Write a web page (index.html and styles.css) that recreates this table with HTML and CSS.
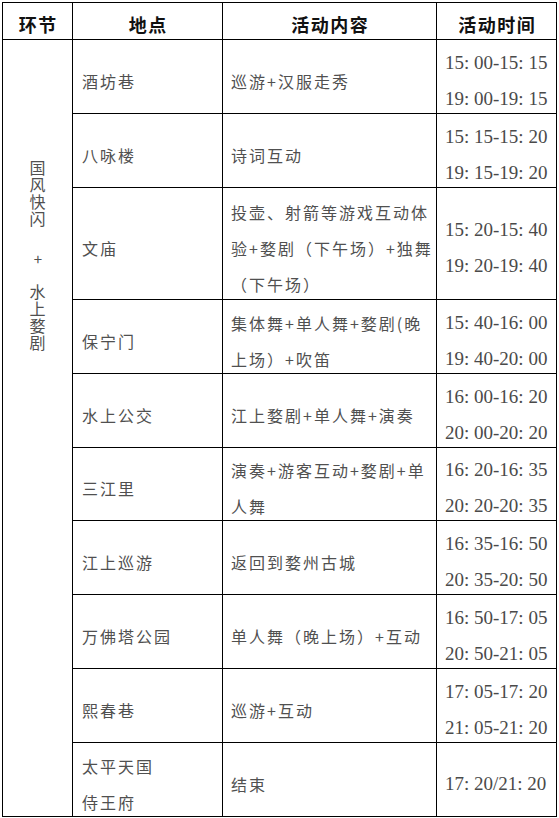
FILE: index.html
```html
<!DOCTYPE html>
<html lang="zh-CN">
<head>
<meta charset="utf-8">
<title>活动安排</title>
<link rel="stylesheet" href="styles.css">
</head>
<body>
<div class="page">
  <div class="sheet">
    <div class="cell head">环节</div>
    <div class="cell head">地点</div>
    <div class="cell head">活动内容</div>
    <div class="cell head">活动时间</div>

    <div class="cell stage">
      <div class="stage-text">
        <span class="vert">国风快闪</span>
        <span class="vert plus">+</span>
        <span class="vert">水上婺剧</span>
      </div>
    </div>

    <div class="cell place">酒坊巷</div>
    <div class="cell text">巡游+汉服走秀</div>
    <div class="cell time">15: 00-15: 15<br>19: 00-19: 15</div>

    <div class="cell place">八咏楼</div>
    <div class="cell text">诗词互动</div>
    <div class="cell time">15: 15-15: 20<br>19: 15-19: 20</div>

    <div class="cell place">文庙</div>
    <div class="cell text">投壶、射箭等游戏互动体<br>验+婺剧（下午场）+独舞<br>（下午场）</div>
    <div class="cell time">15: 20-15: 40<br>19: 20-19: 40</div>

    <div class="cell place">保宁门</div>
    <div class="cell text">集体舞+单人舞+婺剧(晚<br>上场）+吹笛</div>
    <div class="cell time">15: 40-16: 00<br>19: 40-20: 00</div>

    <div class="cell place">水上公交</div>
    <div class="cell text">江上婺剧+单人舞+演奏</div>
    <div class="cell time">16: 00-16: 20<br>20: 00-20: 20</div>

    <div class="cell place">三江里</div>
    <div class="cell text">演奏+游客互动+婺剧+单<br>人舞</div>
    <div class="cell time">16: 20-16: 35<br>20: 20-20: 35</div>

    <div class="cell place">江上巡游</div>
    <div class="cell text">返回到婺州古城</div>
    <div class="cell time">16: 35-16: 50<br>20: 35-20: 50</div>

    <div class="cell place">万佛塔公园</div>
    <div class="cell text">单人舞（晚上场）+互动</div>
    <div class="cell time">16: 50-17: 05<br>20: 50-21: 05</div>

    <div class="cell place">熙春巷</div>
    <div class="cell text">巡游+互动</div>
    <div class="cell time">17: 05-17: 20<br>21: 05-21: 20</div>

    <div class="cell place">太平天国<br>侍王府</div>
    <div class="cell text">结束</div>
    <div class="cell time">17: 20/21: 20</div>
  </div>
</div>
</body>
</html>
```

FILE: styles.css
```css
html, body {
  margin: 0;
  padding: 0;
  background: #ffffff;
}

.page {
  padding: 2px 0 0 2px;
}

.sheet {
  display: grid;
  grid-template-columns: 70px 150px 214px 120px;
  grid-template-rows: 37px 74px 74px 112px 74px 74px 73px 74px 74px 74px 74px;
  width: 555px;
  box-sizing: border-box;
  border-top: 1px solid #000;
  border-left: 1px solid #000;
  font-family: "Noto Sans CJK SC", "Noto Sans", sans-serif;
}

.cell {
  box-sizing: border-box;
  border-right: 1px solid #000;
  border-bottom: 1px solid #000;
  display: flex;
  align-items: center;
  color: #505050;
  font-size: 16px;
  line-height: 36px;
  letter-spacing: 2px;
  padding-top: 8px;
  white-space: nowrap;
}

.head {
  justify-content: center;
  color: #111;
  font-weight: 700;
  font-size: 18px;
  letter-spacing: 1.5px;
  padding-top: 5px;
  padding-left: 1.5px;
}

.stage {
  grid-row: 2 / span 10;
  grid-column: 1;
  align-items: flex-start;
  justify-content: center;
  padding-top: 120px;
}

.stage-text {
  display: flex;
  flex-direction: column;
  align-items: center;
  color: #505050;
}

.vert {
  writing-mode: vertical-rl;
  text-orientation: upright;
  font-size: 16px;
  line-height: 20px;
  letter-spacing: 1px;
}

.vert.plus {
  font-size: 15px;
  margin: 24px 0 17px;
  letter-spacing: 0;
}

.place {
  padding-left: 9px;
}

.text {
  padding-left: 8px;
}

.time {
  padding-left: 8px;
  font-family: "Liberation Serif", "Times New Roman", serif;
  font-size: 19px;
  letter-spacing: 0;
  color: #4a4a4a;
}
```
